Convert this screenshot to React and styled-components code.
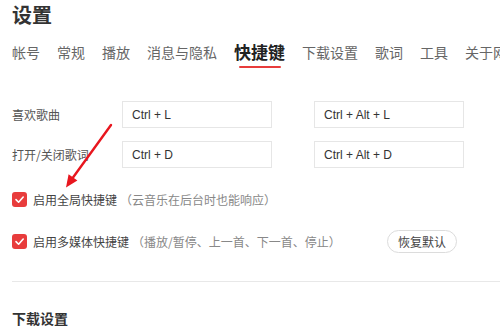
import React from 'react';
import styled, { createGlobalStyle } from 'styled-components';

const CJK = `"Noto Sans CJK SC", "Liberation Sans", sans-serif`;
const LATIN = `"Liberation Sans", "Noto Sans CJK SC", sans-serif`;

const GlobalStyle = createGlobalStyle`
  html, body {
    margin: 0;
    padding: 0;
    background: #fff;
  }
  body {
    font-family: ${CJK};
  }
`;

const tabs = ['帐号', '常规', '播放', '消息与隐私', '快捷键', '下载设置', '歌词', '工具', '关于网易云音乐'];

const shortcuts = [
  { label: '喜欢歌曲', local: 'Ctrl + L', global: 'Ctrl + Alt + L' },
  { label: '打开/关闭歌词', local: 'Ctrl + D', global: 'Ctrl + Alt + D' },
];

const CheckIcon = () => (
  <svg width="15" height="15" viewBox="0 0 15 15">
    <polyline points="4,7.6 6.6,10.2 11.2,5" fill="none" stroke="#fff" strokeWidth="1.6" strokeLinecap="round" strokeLinejoin="round" />
  </svg>
);

const Arrow = () => (
  <ArrowLayer width="500" height="333" viewBox="0 0 500 333">
    <line x1="111" y1="125" x2="73" y2="177.5" stroke="#e8161e" strokeWidth="2.4" strokeLinecap="round" />
    <polygon points="66,187.5 77.4,180.4 68.6,174.2" fill="#e8161e" />
  </ArrowLayer>
);

const App = () => {
  return (
    <>
      <GlobalStyle />
      <Page>
        <Title>设置</Title>
        <TabBar>
          {tabs.map((t) => (
            <Tab key={t} $active={t === '快捷键'}>
              {t}
            </Tab>
          ))}
        </TabBar>

        <ShortcutList>
          {shortcuts.map((s) => (
            <ShortcutRow key={s.label}>
              <RowLabel>{s.label}</RowLabel>
              <KeyGroup>
                <KeyBox>{s.local}</KeyBox>
                <KeyBox>{s.global}</KeyBox>
              </KeyGroup>
            </ShortcutRow>
          ))}
        </ShortcutList>

        <OptionList>
          <OptionRow>
            <CheckBox>
              <CheckIcon />
            </CheckBox>
            <OptionText>启用全局快捷键</OptionText>
            <Hint>（云音乐在后台时也能响应）</Hint>
          </OptionRow>
          <OptionRow>
            <CheckBox>
              <CheckIcon />
            </CheckBox>
            <OptionText>启用多媒体快捷键</OptionText>
            <Hint>（播放/暂停、上一首、下一首、停止）</Hint>
            <ResetButton>恢复默认</ResetButton>
          </OptionRow>
        </OptionList>

        <Divider />
        <SectionTitle>下载设置</SectionTitle>

        <Arrow />
      </Page>
    </>
  );
};

const Page = styled.div`
  position: relative;
  width: 500px;
  height: 333px;
  overflow: hidden;
  padding-left: 12px;
  box-sizing: border-box;
`;

const Title = styled.h1`
  margin: 0;
  padding-top: 1px;
  font-size: 20px;
  line-height: 28px;
  font-weight: 700;
  color: #333;
`;

const TabBar = styled.div`
  display: flex;
  align-items: center;
  gap: 17px;
  margin-top: 11px;
  height: 24px;
  white-space: nowrap;
`;

const Tab = styled.div`
  position: relative;
  flex-shrink: 0;
  font-size: ${(p) => (p.$active ? '17px' : '14px')};
  font-weight: ${(p) => (p.$active ? 700 : 400)};
  color: ${(p) => (p.$active ? '#222' : '#666')};
  line-height: 24px;

  &::after {
    content: '';
    display: ${(p) => (p.$active ? 'block' : 'none')};
    position: absolute;
    left: 50%;
    bottom: -4px;
    width: 42px;
    height: 2px;
    margin-left: -21px;
    background: #e83c3c;
    border-radius: 1px;
  }
`;

const ShortcutList = styled.div`
  display: flex;
  flex-direction: column;
  gap: 13px;
  margin-top: 37px;
`;

const ShortcutRow = styled.div`
  display: flex;
  align-items: center;
`;

const RowLabel = styled.div`
  width: 110px;
  flex-shrink: 0;
  font-size: 12px;
  color: #555;
`;

const KeyGroup = styled.div`
  display: flex;
  gap: 42px;
`;

const KeyBox = styled.div`
  width: 150px;
  height: 27px;
  box-sizing: border-box;
  border: 1px solid #e6e6e6;
  padding-left: 9px;
  display: flex;
  align-items: center;
  font-family: ${LATIN};
  font-size: 12px;
  color: #333;
`;

const OptionList = styled.div`
  display: flex;
  flex-direction: column;
  gap: 18px;
  margin-top: 19px;
  width: 445px;
`;

const OptionRow = styled.div`
  display: flex;
  align-items: center;
  height: 24px;
  white-space: nowrap;
`;

const CheckBox = styled.span`
  width: 15px;
  height: 15px;
  border-radius: 3px;
  background: #e83c3c;
  display: inline-flex;
  align-items: center;
  justify-content: center;
  margin-right: 6px;
  flex-shrink: 0;
`;

const OptionText = styled.span`
  font-size: 12px;
  color: #444;
`;

const Hint = styled.span`
  margin-left: 3px;
  font-size: 12px;
  color: #888;
`;

const ResetButton = styled.button`
  margin-left: auto;
  width: 70px;
  height: 23px;
  border: 1px solid #dcdcdc;
  border-radius: 12px;
  background: #fff;
  font-family: ${CJK};
  font-size: 12px;
  color: #444;
  padding: 0;
  cursor: pointer;
`;

const Divider = styled.div`
  height: 1px;
  background: #e8e8e8;
  margin-top: 28px;
  margin-right: -12px;
`;

const SectionTitle = styled.h2`
  margin: 26px 0 0;
  font-size: 14px;
  line-height: 20px;
  font-weight: 700;
  color: #333;
`;

const ArrowLayer = styled.svg`
  position: absolute;
  left: 0;
  top: 0;
  pointer-events: none;
`;

export default App;
